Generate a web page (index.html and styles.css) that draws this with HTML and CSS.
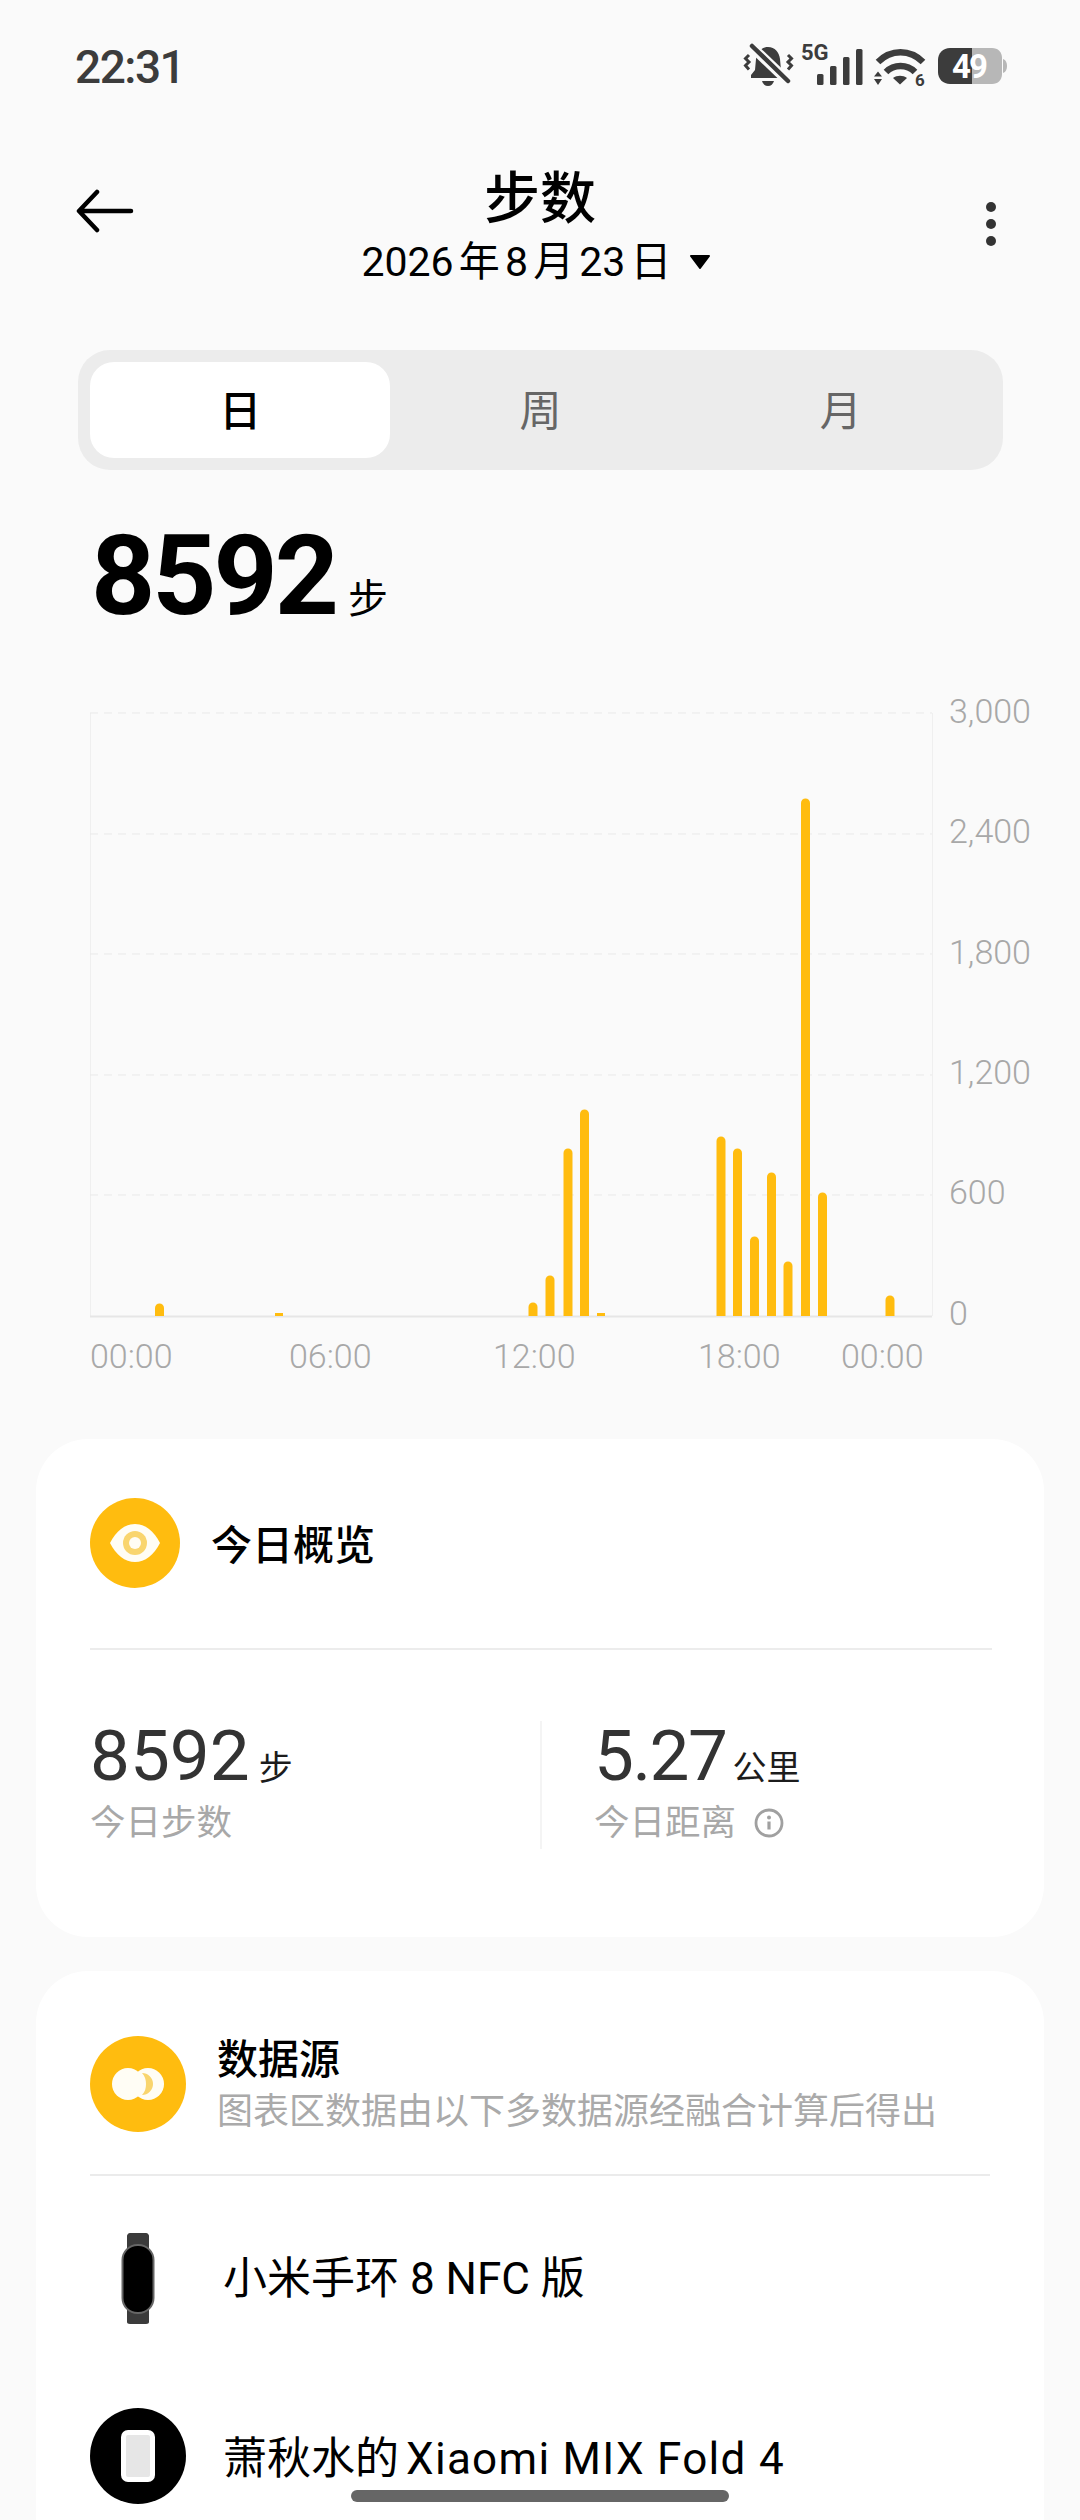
FILE: index.html
```html
<!DOCTYPE html>
<html lang="zh-CN">
<head>
    <meta charset="UTF-8">
    <meta name="viewport" content="width=device-width, initial-scale=1.0">
    <title>步数</title>
    <link rel="stylesheet" href="styles.css">
</head>
<body>
    <div class="status-bar">
        <span class="status-time">22:31</span>
        <svg class="status-icons" width="268" height="60" viewBox="742 38 268 60">
            <!-- muted bell -->
            <path d="M768 48c-7 0-11 5-12 12l-1 11-4 5v3h34v-3l-4-5-1-11c-1-7-5-12-12-12z" fill="#3c3c3c"/>
            <path d="M762 82h12c-1 3-3 5-6 5s-5-2-6-5z" fill="#3c3c3c"/>
            <path d="M750 46l40 38" stroke="#fafafa" stroke-width="10"/>
            <path d="M752 47l36 35" stroke="#3c3c3c" stroke-width="4.500" stroke-linecap="round"/>
            <path d="M749 56l-3.500 3.500 3.500 3.500-3.500 3.500 3.500 4M788 56l3.500 3.500-3.500 3.500 3.500 3.500-3.500 4" fill="none" stroke="#3c3c3c" stroke-width="3"/>
            <text class="icon-text" x="801" y="61" font-size="22">5G</text>
            <!-- signal -->
            <rect x="817" y="75" width="6.500" height="11" rx="1.500" fill="#3c3c3c"/>
            <rect x="830" y="67" width="6.500" height="19" rx="1.500" fill="#3c3c3c"/>
            <rect x="843" y="58" width="6.500" height="28" rx="1.500" fill="#3c3c3c"/>
            <rect x="856" y="50" width="6.500" height="36" rx="1.500" fill="#3c3c3c"/>
            <!-- wifi -->
            <path d="M878 63c13-13 32-13 45 0" fill="none" stroke="#3c3c3c" stroke-width="6.500"/>
            <path d="M886 73c8-8 21-8 29 0" fill="none" stroke="#3c3c3c" stroke-width="6.500"/>
            <path d="M893 79c4-3 10-3 14 0l-7 6.500z" fill="#3c3c3c"/>
            <path d="M874 77.500l4-5 4 5zM874 80l4 6 4-6z" fill="#3c3c3c"/>
            <text class="icon-text" x="915" y="87" font-size="17">6</text>
            <!-- battery -->
            <path d="M972 49h20c6 0 10 4 10 10v16c0 6-4 10-10 10h-20z" fill="#b7b7b7"/>
            <path d="M1003 60c3 1 4 4 4 7s-1 6-4 7z" fill="#b7b7b7"/>
            <path d="M972 49h-22c-7 0-12 5-12 12v12c0 7 5 12 12 12h22z" fill="#3c3c3c"/>
            <text class="icon-text battery-text" x="952" y="79" font-size="33">49</text>
        </svg>
    </div>

    <header class="app-bar">
        <svg class="back-icon" width="58" height="44" viewBox="0 0 58 44">
            <path d="M55 22H4M21 3L3 22l18 19" fill="none" stroke="#000" stroke-width="4.500" stroke-linecap="round" stroke-linejoin="round"/>
        </svg>
        <div class="app-title">
            <h1>步数</h1>
            <div class="date-row">
                <span>2026 年 8 月 23 日</span>
                <svg width="22" height="14" viewBox="0 0 22 14"><path d="M2 1h18l-9 12z" fill="#000" stroke="#000" stroke-width="2" stroke-linejoin="round"/></svg>
            </div>
        </div>
        <div class="more-icon"><i></i><i></i><i></i></div>
    </header>

    <div class="segment">
        <div class="segment-item active">日</div>
        <div class="segment-item">周</div>
        <div class="segment-item">月</div>
    </div>

    <div class="total">
        <span class="total-num">8592</span>
        <span class="total-unit">步</span>
    </div>

    <!-- 图表 -->
    <svg class="chart" width="1080" height="700" viewBox="0 690 1080 700">
        <defs>
            <clipPath id="plotClip"><rect x="90" y="713" width="842" height="603"/></clipPath>
        </defs>
        <path class="grid-box" d="M90.500 713V1316M932.500 713V1316"/>
        <path class="grid-line" d="M90 713H932M90 834H932M90 954H932M90 1075H932M90 1195H932"/>
        <path class="grid-base" d="M90 1316.500H932"/>

        <g clip-path="url(#plotClip)">
            <path class="bar" d="M159.500 1326V1308"/>
            <path class="bar" d="M533 1326V1307"/>
            <path class="bar" d="M550 1326V1280"/>
            <path class="bar" d="M568 1326V1153"/>
            <path class="bar" d="M584.500 1326V1114"/>
            <path class="bar" d="M721 1326V1141"/>
            <path class="bar" d="M737.500 1326V1153"/>
            <path class="bar" d="M754.500 1326V1241"/>
            <path class="bar" d="M771.500 1326V1177"/>
            <path class="bar" d="M788 1326V1266"/>
            <path class="bar" d="M805.500 1326V803"/>
            <path class="bar" d="M822.500 1326V1197"/>
            <path class="bar" d="M890 1326V1300"/>
        </g>
        <rect class="bar-min" x="275" y="1313" width="8" height="3"/>
        <rect class="bar-min" x="597" y="1313" width="8" height="3"/>

        <text class="axis" x="949" y="723">3,000</text>
        <text class="axis" x="949" y="843">2,400</text>
        <text class="axis" x="949" y="964">1,800</text>
        <text class="axis" x="949" y="1084">1,200</text>
        <text class="axis" x="949" y="1204">600</text>
        <text class="axis" x="949" y="1325">0</text>

        <text class="axis" x="90" y="1368">00:00</text>
        <text class="axis" x="289" y="1368">06:00</text>
        <text class="axis" x="493" y="1368">12:00</text>
        <text class="axis" x="698" y="1368">18:00</text>
        <text class="axis" x="841" y="1368">00:00</text>
    </svg>

    <section class="card overview">
        <div class="card-head">
            <svg width="90" height="90" viewBox="0 0 90 90">
                <circle cx="45" cy="45" r="45" fill="#ffbc0f"/>
                <path d="M20 45c6-12 15-19 25-19s19 7 25 19c-6 12-15 19-25 19s-19-7-25-19z" fill="#fffdf5"/>
                <circle cx="45" cy="45" r="12" fill="#f9d56e"/>
                <circle cx="45" cy="45" r="6" fill="#fffdf5"/>
            </svg>
            <h2>今日概览</h2>
        </div>
        <div class="stats">
            <div class="stat">
                <div class="stat-value">8592<small>步</small></div>
                <div class="stat-label">今日步数</div>
            </div>
            <div class="stat stat-right">
                <div class="stat-value">5.27<small>公里</small></div>
                <div class="stat-label">今日距离
                    <svg width="30" height="30" viewBox="0 0 30 30">
                        <circle cx="15" cy="15" r="13" fill="none" stroke="#a0a0a0" stroke-width="2.800"/>
                        <path d="M15 13.500v8" stroke="#a0a0a0" stroke-width="3.200"/>
                        <circle cx="15" cy="9.500" r="2" fill="#a0a0a0"/>
                    </svg>
                </div>
            </div>
        </div>
    </section>

    <section class="card source">
        <div class="source-head">
            <svg width="96" height="96" viewBox="0 0 96 96">
                <circle cx="48" cy="48" r="48" fill="#ffbc0f"/>
                <circle cx="38" cy="48" r="16" fill="#fffdf5"/>
                <circle cx="58" cy="48" r="16" fill="#fffdf5"/>
                <path d="M52 37a11 11 0 0 1 0 22c3-3 4-7 4-11s-1-8-4-11z" fill="#f9d56e"/>
            </svg>
            <div>
                <h2>数据源</h2>
                <p>图表区数据由以下多数据源经融合计算后得出</p>
            </div>
        </div>
        <div class="device">
            <svg width="96" height="96" viewBox="0 0 96 96">
                <path d="M37 8c0-1 1-3 3-3h16c2 0 3 2 3 3v86c0 1-1 2-3 2H40c-2 0-3-1-3-2z" fill="#3b3b3b"/>
                <rect x="32.500" y="17" width="31" height="68" rx="15" fill="#000" stroke="#666" stroke-width="2"/>
            </svg>
            <span class="device-name">小米手环 8 NFC 版</span>
        </div>
        <div class="device">
            <svg width="96" height="96" viewBox="0 0 96 96">
                <circle cx="48" cy="48" r="48" fill="#000"/>
                <rect x="31" y="22" width="34" height="52" rx="7" fill="#fff"/>
                <rect x="36" y="27" width="24" height="42" rx="2" fill="#e6e6e6"/>
            </svg>
            <span class="device-name">萧秋水的<span class="device-model">Xiaomi MIX Fold 4</span></span>
        </div>
    </section>

    <div class="home-bar"></div>
</body>
</html>
```

FILE: styles.css
```css
html, body {
    margin: 0;
    padding: 0;
}

body {
    position: relative;
    width: 1080px;
    height: 2520px;
    overflow: hidden;
    background-color: #fafafa;
    color: #000;
    font-family: Roboto, "Noto Sans CJK SC", sans-serif;
}

h1, h2, p {
    margin: 0;
    font-weight: 500;
}

.status-bar {
    display: flex;
    justify-content: space-between;
    align-items: center;
    height: 134px;
    padding: 0 70px 0 75px;
    box-sizing: border-box;
}

.status-time {
    font-size: 46px;
    font-weight: 500;
    letter-spacing: -1.5px;
    color: #3c3c3c;
}

.status-icons {
    display: block;
}

.icon-text {
    font-family: Roboto, sans-serif;
    font-weight: 700;
    fill: #3c3c3c;
}

.battery-text {
    fill: #fff;
    letter-spacing: -2px;
}

.app-bar {
    display: grid;
    grid-template-columns: 1fr auto 1fr;
    height: 216px;
    padding: 0 76px;
    box-sizing: border-box;
}

.back-icon {
    margin-top: 55px;
}

.app-title {
    display: flex;
    flex-direction: column;
    align-items: center;
    padding-top: 27px;
}

.app-title h1 {
    font-size: 56px;
    font-weight: 500;
    line-height: 76px;
}

.date-row {
    display: flex;
    align-items: center;
    gap: 17px;
    margin-top: -5px;
    margin-left: -8px;
    font-size: 41px;
    line-height: 60px;
    word-spacing: -5px;
}

.more-icon {
    display: flex;
    flex-direction: column;
    align-items: flex-end;
    gap: 7px;
    margin-top: 68px;
    padding-right: 8px;
}

.more-icon i {
    width: 10px;
    height: 10px;
    border-radius: 50%;
    background-color: #333;
}

.segment {
    display: grid;
    grid-template-columns: repeat(3, 1fr);
    height: 120px;
    margin: 0 77px 0 78px;
    padding: 12px;
    box-sizing: border-box;
    border-radius: 32px;
    background-color: #ececec;
}

.segment-item {
    display: flex;
    justify-content: center;
    align-items: center;
    padding-bottom: 6px;
    border-radius: 24px;
    font-size: 42px;
    color: #666;
}

.segment-item.active {
    background-color: #fff;
    color: #000;
    font-weight: 500;
}

.total {
    display: flex;
    align-items: baseline;
    gap: 12px;
    height: 220px;
    padding: 41px 0 0 91px;
    box-sizing: border-box;
}

.total-num {
    font-size: 112px;
    font-weight: 700;
    letter-spacing: -3px;
    line-height: 130px;
}

.total-unit {
    font-size: 40px;
    position: relative;
    top: -1px;
}

.chart {
    display: block;
    height: 700px;
    margin-bottom: 49px;
}

.grid-box {
    fill: none;
    stroke: #efefef;
    stroke-width: 1;
}

.grid-line {
    fill: none;
    stroke: #e9e9e9;
    stroke-width: 1;
    stroke-dasharray: 8 6;
}

.grid-base {
    fill: none;
    stroke: #e6e6e6;
    stroke-width: 2;
}

.bar {
    fill: none;
    stroke: #ffbc0f;
    stroke-width: 9;
    stroke-linecap: round;
}

.bar-min {
    fill: #ffbc0f;
}

.axis {
    font-family: Roboto, sans-serif;
    font-size: 34px;
    font-weight: 300;
    fill: #a8a8a8;
}

.card {
    margin: 0 36px;
    background-color: #fff;
    border-radius: 52px;
}

.overview {
    height: 498px;
    padding: 59px 52px 0 54px;
    box-sizing: border-box;
}

.card-head {
    display: flex;
    align-items: center;
    gap: 32px;
    height: 152px;
    border-bottom: 2px solid #ececec;
    padding-bottom: 61px;
    box-sizing: border-box;
}

.card-head h2 {
    font-size: 41px;
    font-weight: 500;
    margin-left: -1px;
    margin-top: -2px;
}

.stats {
    display: flex;
    margin-top: 71px;
}

.stat {
    flex: 0 0 450px;
    height: 128px;
}

.stat-right {
    padding-left: 52px;
    border-left: 2px solid #f4f4f4;
}

.stat-value {
    display: flex;
    align-items: baseline;
    font-size: 71px;
    line-height: 70px;
    color: #333;
}

.stat-right .stat-value {
    letter-spacing: -1.5px;
}

.stat-value small {
    margin-left: 9px;
    font-size: 34px;
    line-height: 1;
    letter-spacing: 0;
    color: #1c1c1c;
}

.stat-right small {
    margin-left: 6px;
}

.stat-label {
    display: flex;
    align-items: center;
    gap: 18px;
    margin-top: 7px;
    font-size: 35.500px;
    line-height: 50px;
    color: #a8a8a8;
}

.source {
    height: 549px;
    margin-top: 34px;
    padding: 65px 54px 0;
    box-sizing: border-box;
    border-radius: 52px 52px 0 0;
}

.source-head {
    display: flex;
    gap: 31px;
    height: 138px;
    border-bottom: 2px solid #ebebeb;
}

.source-head h2 {
    font-size: 41px;
    line-height: 56px;
    margin-top: -4px;
}

.source-head p {
    font-size: 36px;
    font-weight: 400;
    line-height: 48px;
    color: #aaa;
}

.device {
    display: flex;
    align-items: center;
    gap: 38px;
    height: 96px;
    margin-top: 52px;
    font-size: 44px;
    line-height: 60px;
}

.device + .device {
    margin-top: 84px;
}

.device-name {
    margin-left: -1px;
    padding-top: 5px;
}

.device-model {
    margin-left: 7px;
    letter-spacing: 1.300px;
}

.home-bar {
    position: absolute;
    left: 351px;
    bottom: 18px;
    width: 378px;
    height: 12px;
    border-radius: 6px;
    background-color: #666;
}
```
